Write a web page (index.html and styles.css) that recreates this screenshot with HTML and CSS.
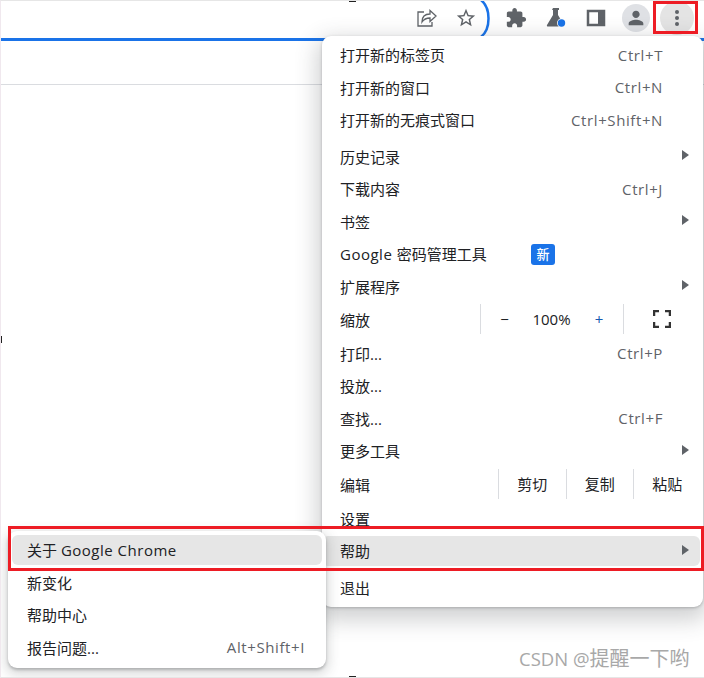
FILE: index.html
```html
<!DOCTYPE html>
<html lang="zh-CN">
<head>
  <meta charset="UTF-8">
  <meta name="viewport" content="width=device-width, initial-scale=1.0">
  <title>Chrome 菜单</title>
  <link rel="stylesheet" href="styles.css">
</head>
<body>
  <div class="browser">
    <div class="toolbar">
      <span class="tool">
        <svg width="22" height="22" viewBox="0 0 22 22" fill="none" stroke="#5f6368" stroke-width="1.3"><path d="M9 5H3v14h14v-4"/><path d="M7 15c0-5 3-8 8-8V3.500l6 5.500-6 5.500V11c-3 0-6 1-8 4z" fill="#fff"/></svg>
      </span>
      <span class="tool">
        <svg width="22" height="22" viewBox="0 0 24 24" fill="#5f6368"><path d="M22 9.240l-7.190-.62L12 2 9.190 8.630 2 9.240l5.460 4.730L5.820 21 12 17.270 18.180 21l-1.630-7.030L22 9.240zM12 15.400l-3.760 2.270 1-4.280-3.320-2.880 4.380-.38L12 6.100l1.710 4.040 4.380.38-3.320 2.880 1 4.280L12 15.400z"/></svg>
      </span>
      <span class="tool-gap"></span>
      <span class="tool">
        <svg width="22" height="22" viewBox="0 0 24 24" fill="#5f6368"><path d="M20.500 11H19V7c0-1.100-.9-2-2-2h-4V3.500C13 2.120 11.880 1 10.500 1S8 2.120 8 3.500V5H4c-1.100 0-1.990.9-1.990 2v3.800H3.500c1.490 0 2.700 1.210 2.700 2.700s-1.210 2.700-2.700 2.700H2V20c0 1.100.9 2 2 2h3.800v-1.500c0-1.490 1.210-2.700 2.700-2.700 1.490 0 2.700 1.210 2.700 2.700V22H17c1.100 0 2-.9 2-2v-4h1.500c1.380 0 2.500-1.120 2.500-2.500S21.880 11 20.500 11z"/></svg>
      </span>
      <span class="tool">
        <svg width="22" height="22" viewBox="0 0 22 22"><path d="M8 2h6v2h-1v5l6 10c.4.8 0 1.500-1 1.500H3c-1 0-1.400-.7-1-1.500L8 9V4H7z" fill="#5f6368" transform="translate(0 -1)"/><circle cx="16.500" cy="16" r="4.500" fill="#fff"/><circle cx="16.500" cy="16" r="3.700" fill="#1a73e8"/></svg>
      </span>
      <span class="tool">
        <svg width="20" height="18" viewBox="0 0 20 18"><rect x="2" y="2" width="16" height="14" fill="#fff" stroke="#5f6368" stroke-width="2.500"/><rect x="12" y="2" width="6" height="14" fill="#5f6368"/></svg>
      </span>
      <span class="tool">
        <span class="avatar">
          <svg width="22" height="22" viewBox="0 0 24 24" fill="#5f6368"><path d="M12 12c2.210 0 4-1.790 4-4s-1.790-4-4-4-4 1.790-4 4 1.790 4 4 4zm0 2c-2.670 0-8 1.340-8 4v2h16v-2c0-2.660-5.330-4-8-4z"/></svg>
        </span>
      </span>
      <span class="tool tool-menu">
        <span class="kebab"><i></i><i></i><i></i></span>
      </span>
    </div>
    <div class="loadbar"></div>
    <div class="bookmarks"></div>

    <svg class="arc" width="14" height="38" viewBox="0 0 14 38" fill="none" stroke="#1a73e8" stroke-width="2.500"><path d="M1 -1C11 7 11 28 1 36"/></svg>

    <div class="menu">
      <div class="group">
        <div class="row"><span>打开新的标签页</span><span class="keys">Ctrl+T</span></div>
        <div class="row"><span>打开新的窗口</span><span class="keys">Ctrl+N</span></div>
        <div class="row"><span>打开新的无痕式窗口</span><span class="keys">Ctrl+Shift+N</span></div>
      </div>
      <div class="group gap-first">
        <div class="row"><span>历史记录</span><span class="more"></span></div>
        <div class="row"><span>下载内容</span><span class="keys">Ctrl+J</span></div>
        <div class="row"><span>书签</span><span class="more"></span></div>
        <div class="row"><span><span class="latin">Google </span>密码管理工具</span><span class="badge">新</span></div>
        <div class="row"><span>扩展程序</span><span class="more"></span></div>
      </div>
      <div class="group gap-xs">
        <div class="row">
          <span>缩放</span>
          <div class="zoom">
            <span class="zoom-btn">−</span>
            <span class="zoom-val">100%</span>
            <span class="zoom-btn plus">+</span>
            <span class="zoom-full">
              <svg width="18" height="18" viewBox="0 0 18 18" fill="none" stroke="#333" stroke-width="2.500"><path d="M1 6V1h5M12 1h5v5M17 12v5h-5M6 17H1v-5"/></svg>
            </span>
          </div>
        </div>
      </div>
      <div class="group gap-md">
        <div class="row"><span>打印...</span><span class="keys">Ctrl+P</span></div>
        <div class="row"><span>投放...</span></div>
        <div class="row"><span>查找...</span><span class="keys">Ctrl+F</span></div>
        <div class="row"><span>更多工具</span><span class="more"></span></div>
      </div>
      <div class="group gap-sm">
        <div class="row">
          <span>编辑</span>
          <div class="edit">
            <span>剪切</span>
            <span>复制</span>
            <span>粘贴</span>
          </div>
        </div>
      </div>
      <div class="group gap-md">
        <div class="row"><span>设置</span></div>
        <div class="row active"><span>帮助</span><span class="more"></span></div>
      </div>
      <div class="group gap-last">
        <div class="row"><span>退出</span></div>
      </div>
    </div>

    <div class="submenu">
      <div class="row active"><span>关于 <span class="latin">Google Chrome</span></span></div>
      <div class="row"><span>新变化</span></div>
      <div class="row"><span>帮助中心</span></div>
      <div class="row"><span>报告问题...</span><span class="keys">Alt+Shift+I</span></div>
    </div>

    <div class="redbox redbox-top"></div>
    <div class="redbox redbox-help"></div>
    <div class="watermark"><span class="watermark-latin">CSDN @</span>提醒一下哟</div>
    <i class="handle handle-top"></i>
    <i class="handle handle-left"></i>
    <i class="handle handle-bottom"></i>
  </div>
</body>
</html>
```

FILE: styles.css
```css
* {
  box-sizing: border-box;
}
html, body {
  margin: 0;
  padding: 0;
  background: #fff;
}
body {
  font-family: "Open Sans", "Noto Sans CJK SC", sans-serif;
  font-size: 15px;
  color: #202124;
}
.browser {
  position: relative;
  width: 704px;
  height: 678px;
  overflow: hidden;
  border-top: 1px solid #e6e6e6;
  border-bottom: 1px solid #e6e6e6;
  border-left: 1px solid #f0e8ee;
}
.toolbar {
  display: flex;
  justify-content: flex-end;
  align-items: center;
  height: 37px;
  padding: 0 6px 3px 0;
}
.tool {
  display: flex;
  justify-content: center;
  align-items: center;
  width: 40px;
}
.tool-menu {
  margin: 0 1px;
}
.tool-gap {
  width: 10px;
}
.avatar {
  display: flex;
  justify-content: center;
  align-items: center;
  width: 28px;
  height: 28px;
  border-radius: 50%;
  background: #dfe1e5;
}
.kebab {
  display: flex;
  flex-direction: column;
  justify-content: center;
  align-items: center;
  gap: 2px;
  flex: none;
  width: 34px;
  height: 34px;
  border-radius: 50%;
  background: #e4e4e4;
}
.kebab i {
  width: 4px;
  height: 4px;
  border-radius: 50%;
  background: #5f6368;
}
.loadbar {
  height: 3px;
  background: #1a73e8;
}
.bookmarks {
  height: 44px;
  border-bottom: 1px solid #dadce0;
}
.arc {
  position: absolute;
  left: 479px;
  top: 0;
}
.menu {
  position: absolute;
  left: 321px;
  top: 35px;
  width: 381px;
  height: 571px;
  padding: 2.500px 3px 0 0;
  background: #fff;
  border-radius: 9px;
  box-shadow: 0 1px 3px rgba(60, 64, 67, .3), 0 8px 22px 5px rgba(60, 64, 67, .24);
}
.row {
  display: flex;
  justify-content: space-between;
  align-items: center;
  position: relative;
  height: 32.500px;
  padding: 0 37px 0 18px;
  white-space: nowrap;
}
.latin {
  letter-spacing: .5px;
}
.gap-first {
  margin-top: 4px;
}
.gap-xs {
  margin-top: .500px;
}
.gap-sm {
  margin-top: 1px;
}
.gap-md {
  margin-top: 1.500px;
}
.gap-last {
  margin-top: 5.500px;
}
.keys {
  color: #5f6368;
  letter-spacing: .6px;
}
.more {
  position: absolute;
  right: 11px;
  top: calc(50% - 6px);
  border-left: 7.500px solid #5f6368;
  border-top: 5px solid transparent;
  border-bottom: 5px solid transparent;
}
.active {
  background: #e6e6e6;
  border-radius: 6px;
}
.menu .active {
  height: 30px;
  margin: 1px 0 1.500px;
}
.badge {
  position: absolute;
  left: 209px;
  top: 6px;
  width: 24px;
  height: 21px;
  border-radius: 3px;
  background: #1a73e8;
  color: #fff;
  font-size: 13px;
  font-weight: 500;
  line-height: 21px;
  text-align: center;
}
.zoom {
  position: absolute;
  left: 158px;
  top: 0;
  display: flex;
  align-items: center;
  height: 30px;
  margin-top: 1px;
  border-left: 1px solid #dadce0;
}
.zoom-btn, .zoom-val {
  width: 47px;
  text-align: center;
}
.zoom-btn.plus {
  color: #1558b0;
  width: 48px;
}
.zoom-full {
  display: flex;
  justify-content: center;
  align-items: center;
  width: 77px;
  height: 30px;
  border-left: 1px solid #dadce0;
}
.edit {
  position: absolute;
  left: 176px;
  top: 0;
  display: flex;
  height: 30px;
  margin-top: 1px;
}
.edit span {
  width: 67.500px;
  line-height: 30px;
  text-align: center;
  border-left: 1px solid #dadce0;
}
.submenu {
  position: absolute;
  left: 7px;
  top: 530px;
  width: 318px;
  height: 137px;
  padding: 4px;
  background: #fff;
  border-radius: 9px;
  box-shadow: 0 2px 3px rgba(60, 64, 67, .3), 0 4px 12px 3px rgba(60, 64, 67, .18);
}
.submenu .row {
  padding: 0 17px 2px 15px;
}
.submenu .active {
  height: 30px;
  margin-bottom: 2px;
}
.redbox {
  position: absolute;
  border: 3px solid #ed1c24;
}
.redbox-top {
  left: 652px;
  top: 0;
  width: 45px;
  height: 33px;
}
.redbox-help {
  left: 7px;
  top: 525px;
  width: 696px;
  height: 45px;
}
.watermark {
  position: absolute;
  left: 518px;
  top: 646px;
  color: #a8a8a8;
  font-size: 20px;
  line-height: 24px;
  white-space: nowrap;
}
.watermark-latin {
  font-size: 18.500px;
}
.handle {
  position: absolute;
  background: #222;
}
.handle-top {
  left: 348px;
  top: -1px;
  width: 7px;
  height: 2px;
}
.handle-bottom {
  left: 348px;
  top: 675px;
  width: 7px;
  height: 2px;
}
.handle-left {
  left: -1px;
  top: 335px;
  width: 2px;
  height: 7px;
}
```
